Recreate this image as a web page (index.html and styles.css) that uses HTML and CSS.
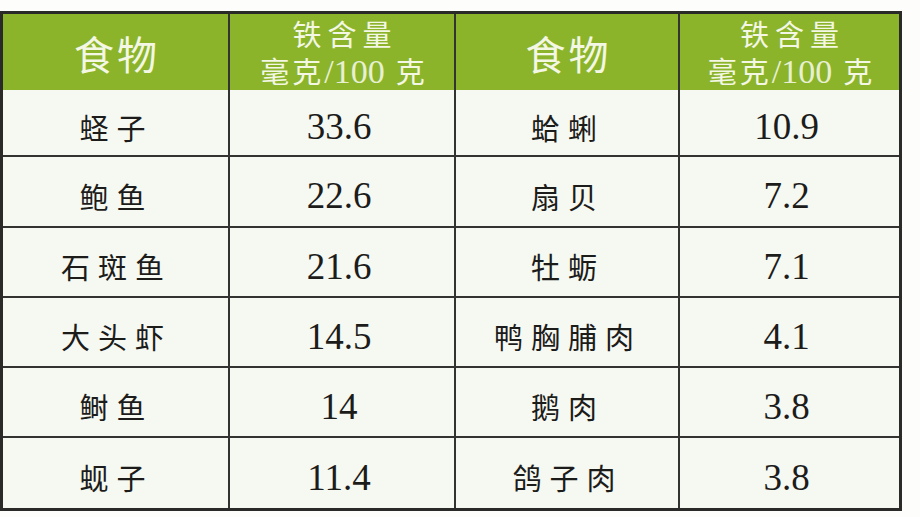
FILE: index.html
```html
<!DOCTYPE html>
<html lang="zh-CN">
<head>
<meta charset="utf-8">
<title>食物铁含量</title>
<link rel="stylesheet" href="styles.css">
</head>
<body>
<div class="table">
  <div class="cell head food">食物</div>
  <div class="cell head iron"><span class="l1">铁含量</span><span class="l2">毫克<span class="serif">/100</span><span class="gap"></span>克</span></div>
  <div class="cell head food">食物</div>
  <div class="cell head iron last"><span class="l1">铁含量</span><span class="l2">毫克<span class="serif">/100</span><span class="gap"></span>克</span></div>

  <div class="cell name r1">蛏子</div><div class="cell num r1">33.6</div><div class="cell name r1">蛤蜊</div><div class="cell num last r1">10.9</div>
  <div class="cell name r2">鲍鱼</div><div class="cell num r2">22.6</div><div class="cell name r2">扇贝</div><div class="cell num last r2">7.2</div>
  <div class="cell name r3">石斑鱼</div><div class="cell num r3">21.6</div><div class="cell name r3">牡蛎</div><div class="cell num last r3">7.1</div>
  <div class="cell name r4">大头虾</div><div class="cell num r4">14.5</div><div class="cell name r4">鸭胸脯肉</div><div class="cell num last r4">4.1</div>
  <div class="cell name r5">鲥鱼</div><div class="cell num r5">14</div><div class="cell name r5">鹅肉</div><div class="cell num last r5">3.8</div>
  <div class="cell name r6 bottom">蚬子</div><div class="cell num r6 bottom">11.4</div><div class="cell name r6 bottom">鸽子肉</div><div class="cell num last r6 bottom">3.8</div>
</div>
</body>
</html>
```
FILE: styles.css
```css
html, body {
  margin: 0;
  padding: 0;
  background: #fdfdfb;
}
body {
  padding-top: 11px;
}
.table {
  display: grid;
  grid-template-columns: 227px 226px 224px 219px;
  grid-template-rows: 76px 67px 71px 70px 70px 70px 70px;
  width: fit-content;
  border: 3px solid #2a2a28;
}
.cell {
  box-sizing: border-box;
  display: flex;
  align-items: center;
  justify-content: center;
  border-right: 2px solid #333331;
  border-bottom: 2px solid #333331;
  background: #f6f8f2;
  color: #1c1c1a;
}
.cell.last {
  border-right: none;
}
.cell.bottom {
  border-bottom: none;
}
.head {
  background: #8bb42a;
  color: #f3f7e4;
  border-bottom: none;
  font-family: "Noto Sans CJK SC", "Noto Sans", sans-serif;
}
.food {
  font-size: 40px;
  font-weight: 400;
  letter-spacing: 3px;
  padding-left: 3px;
  padding-top: 2px;
}
.iron {
  flex-direction: column;
  font-size: 29px;
  line-height: 37px;
  padding-top: 0;
}
.iron .l1 {
  letter-spacing: 6px;
  padding-left: 6px;
}
.iron .l2 {
  display: flex;
  align-items: baseline;
  letter-spacing: 3px;
  white-space: pre;
  padding-left: 4px;
}
.gap {
  display: inline-block;
  width: 11px;
}
.serif {
  font-family: "Liberation Serif", serif;
  font-size: 34px;
  font-weight: 300;
  letter-spacing: 0;
  opacity: 0.9;
}
.name {
  font-family: "Noto Sans CJK SC", sans-serif;
  font-size: 29px;
  letter-spacing: 8px;
  padding-left: 2px;
  padding-top: 8px;
}
.num {
  font-family: "Liberation Serif", serif;
  font-size: 37px;
  padding-top: 8px;
  padding-right: 6px;
}
```
